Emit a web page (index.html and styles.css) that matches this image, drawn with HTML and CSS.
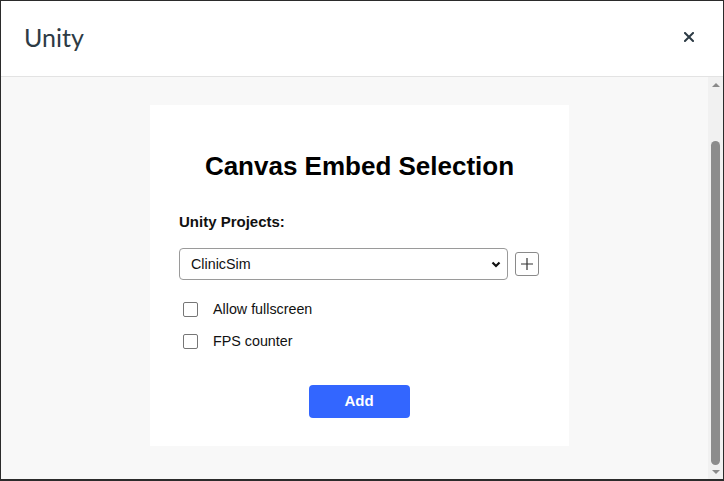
FILE: index.html
```html
<!DOCTYPE html>
<html lang="en">
<head>
<meta charset="utf-8">
<title>Unity</title>
<link rel="stylesheet" href="styles.css">
</head>
<body>
<div class="modal">
  <header class="hdr">
    <h1 class="hdr-title">Unity</h1>
    <button class="close" aria-label="Close">
      <svg width="10" height="10" viewBox="0 0 10 10"><path d="M1 1L9 9M9 1L1 9" stroke="#2d3b45" stroke-width="2" stroke-linecap="square"/></svg>
    </button>
  </header>
  <div class="body">
    <div class="content">
      <div class="card">
        <h2 class="card-title">Canvas Embed Selection</h2>
        <div class="field-label">Unity Projects:</div>
        <div class="select-row">
          <div class="select">
            <span>ClinicSim</span>
            <svg class="chev" width="10" height="7" viewBox="0 0 10 7"><path d="M1.5 1.5L5 5L8.5 1.5" fill="none" stroke="#111" stroke-width="2.2"/></svg>
          </div>
          <button class="plus" aria-label="Add project">
            <svg width="14" height="14" viewBox="0 0 14 14"><path d="M7 1V13M1 7H13" stroke="#333" stroke-width="1.2"/></svg>
          </button>
        </div>
        <label class="check-row"><span class="box"></span>Allow fullscreen</label>
        <label class="check-row second"><span class="box"></span>FPS counter</label>
        <div class="btn-row"><button class="add">Add</button></div>
      </div>
    </div>
    <div class="sb">
      <div class="arrow up"></div>
      <div class="track"><div class="thumb"></div></div>
      <div class="arrow down"></div>
    </div>
  </div>
</div>
</body>
</html>
```

FILE: styles.css
```css
* { box-sizing: border-box; }
html, body { margin: 0; padding: 0; }
body { font-family: "Liberation Sans", Arial, sans-serif; background: #fff; }

.modal {
  width: 724px;
  height: 481px;
  border: 1px solid #2b2b2b;
  border-bottom-width: 2px;
  display: flex;
  flex-direction: column;
  overflow: hidden;
}

.hdr {
  height: 76px;
  flex: none;
  display: flex;
  align-items: center;
  justify-content: space-between;
  padding: 0 29px 0 23px;
  border-bottom: 1px solid #e3e3e3;
  background: #fff;
}
.hdr-title {
  margin: -4px 0 0;
  font-family: Lato, "Liberation Sans", sans-serif;
  font-weight: 400;
  font-size: 25px;
  color: #2d3b45;
  line-height: 30px;
}
.close {
  border: 0;
  background: none;
  padding: 0;
  width: 10px;
  height: 10px;
  display: flex;
  margin-top: -4px;
}

.body {
  flex: 1;
  display: flex;
  background: #f8f8f8;
  min-height: 0;
}
.content { flex: 1; }

.card {
  width: 419px;
  margin: 28px 0 0 149px;
  background: #fff;
  padding: 46px 29px 28px;
}
.card-title {
  margin: 0;
  font-size: 26px;
  line-height: 30px;
  font-weight: 700;
  text-align: center;
  color: #000;
}
.field-label {
  margin-top: 32px;
  font-size: 15px;
  line-height: 18px;
  font-weight: 700;
  color: #111;
}
.select-row {
  margin-top: 17px;
  display: flex;
  align-items: center;
  gap: 7px;
}
.select {
  width: 329px;
  height: 32px;
  border: 1px solid #9a9a9a;
  border-radius: 4px;
  display: flex;
  align-items: center;
  justify-content: space-between;
  padding: 0 6px 0 11px;
  font-size: 14.3px;
  color: #111;
}
.chev { margin-top: 1px; }
.plus {
  width: 24px;
  height: 24px;
  padding: 0;
  border: 1px solid #8a8a8a;
  border-radius: 3px;
  background: #fff;
  display: flex;
  align-items: center;
  justify-content: center;
}
.check-row {
  margin-top: 19px;
  height: 20px;
  display: flex;
  align-items: center;
  font-size: 14.3px;
  color: #111;
}
.check-row.second { margin-top: 12px; }
.box {
  width: 15px;
  height: 15px;
  border: 1px solid #767676;
  border-radius: 2px;
  margin: 0 15px 0 4px;
  background: #fff;
}
.btn-row {
  margin-top: 34px;
  display: flex;
  justify-content: center;
}
.add {
  width: 101px;
  height: 33px;
  border: 0;
  border-radius: 4px;
  background: #3366ff;
  color: #fff;
  font-family: "Liberation Sans", Arial, sans-serif;
  font-weight: 700;
  font-size: 15px;
  padding: 0 0 2px;
  margin-left: -1px;
}

.sb {
  width: 15px;
  flex: none;
  background: #f1f1f1;
  display: flex;
  flex-direction: column;
  align-items: center;
  padding: 6px 0 5px;
}
.arrow {
  width: 0;
  height: 0;
  border-left: 4px solid transparent;
  border-right: 4px solid transparent;
}
.arrow.up { border-bottom: 4px solid #8a8a8a; }
.arrow.down { border-top: 4px solid #8a8a8a; }
.track {
  flex: 1;
  width: 100%;
  display: flex;
  justify-content: center;
  padding: 54px 0 5px;
}
.thumb {
  width: 9px;
  height: 100%;
  background: #8c8c8c;
  border-radius: 5px;
}
```
